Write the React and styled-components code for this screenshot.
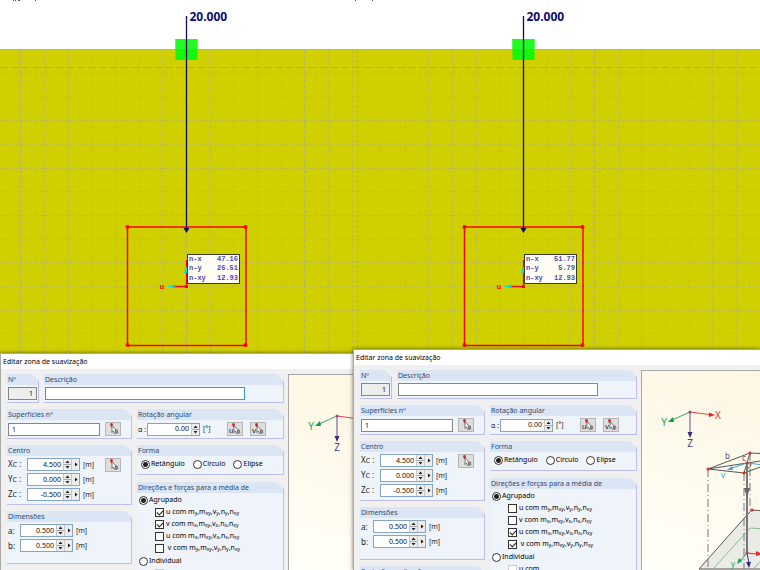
import { useId } from "react";
import styled, { createGlobalStyle } from "styled-components";

const GlobalStyle = createGlobalStyle`
  * {
    box-sizing: border-box;
  }
  body {
    margin: 0;
    background: #d0d000;
    font-family: "Noto Sans", "Open Sans", sans-serif;
    font-size: 7px;
    line-height: 10px;
    color: #1c1c1c;
  }
`;

const Page = styled.main`
  display: grid;
  grid-template-columns: 353fr 407fr;
  height: 100vh;
  overflow: hidden;
`;

const Pane = styled.section`
  display: flex;
  flex-direction: column;
  min-width: 0;
  min-height: 0;
`;

const Viewport = styled.div`
  position: relative;
  flex: 0 0 ${(props) => props.$height}px;
  background: #d0d000;
  overflow: hidden;
`;

const Mesh = styled.svg`
  display: block;
  width: 100%;
  height: 100%;
`;

const LoadLabel = styled.text`
  font-size: 12px;
  font-weight: 700;
  fill: #0a0a6e;
`;

const AxisLabel = styled.text`
  font-family: "Liberation Mono", monospace;
  font-size: 8px;
  font-weight: 700;
  fill: #f00;
`;

const ResultTip = styled.table`
  position: absolute;
  top: 254px;
  left: ${(props) => props.$left}px;
  width: 53px;
  height: 30px;
  border: 1px solid #3c3c28;
  border-spacing: 0;
  background: #fffcf4;
  color: #4a45b4;
  font-family: "Liberation Mono", monospace;
  font-size: 7px;
  font-weight: 700;
  line-height: 9px;

  th,
  td {
    padding: 0 1px;
    font-weight: 700;
    text-align: left;
  }
  td {
    text-align: right;
  }
`;

const Window = styled.form`
  position: relative;
  flex: 1;
  display: flex;
  flex-direction: column;
  min-height: 0;
  border: 1px solid #a9a9a9;
  border-width: 1px 0 0 1px;
  background: #f0f0f0;
  box-shadow: 0 0 4px rgba(0, 0, 0, 0.55);
`;

const TitleBar = styled.h1`
  flex: 0 0 15px;
  margin: 0;
  padding: 0 2px;
  background: #fff;
  color: #000;
  font-size: 7px;
  font-weight: 400;
  line-height: 15px;
  white-space: nowrap;
`;

const Body = styled.div`
  flex: 1;
  display: flex;
  gap: 4px;
  min-height: 0;
  padding: 5px 0 0 6px;
`;

const Fields = styled.div`
  flex: 0 0 277px;
  display: flex;
  flex-direction: column;
  gap: 6px;
  overflow: hidden;
`;

const Columns = styled.div`
  display: grid;
  grid-template-columns: ${(props) => props.$cols};
  gap: 5px;
  align-items: start;
`;

const Stack = styled.div`
  display: flex;
  flex-direction: column;
  gap: ${(props) => props.$gap}px;
`;

const Options = styled.div`
  padding-bottom: 1px;
`;

const Group = styled.fieldset`
  min-width: 0;
  min-height: ${(props) => props.$height}px;
  margin: 0;
  padding: 0;
  border: 1px solid #bdbdf0;
  border-width: 0 1px 1px 0;
  background: #eff3fa;
  clip-path: polygon(0 0, calc(100% - 7px) 0, 100% 7px, 100% 100%, 0 100%);
`;

const GroupTitle = styled.legend`
  float: left;
  width: 100%;
  height: 11px;
  padding: 0 1px;
  background: #dbe5f4;
  color: #2b4a72;
  line-height: 11px;
  white-space: nowrap;
`;

const GroupBody = styled.div`
  clear: both;
  display: flex;
  align-items: ${(props) => props.$align || "center"};
  gap: ${(props) => props.$gap || 5}px;
  padding: ${(props) => props.$pad || "2px 1px"};
`;

const TextBox = styled.input`
  width: ${(props) => props.$width};
  height: 13px;
  padding: 0 3px;
  border: 1px solid ${(props) => (props.$active ? "#3a96dd" : "#84868a")};
  outline: none;
  background: ${(props) => (props.readOnly ? "#eee" : "#fff")};
  color: #111;
  font: inherit;
  text-align: ${(props) => props.$align || "left"};
`;

const Line = styled.div`
  display: flex;
  align-items: center;
  height: 13px;
  white-space: nowrap;
`;

const Name = styled.label`
  flex: 0 0 ${(props) => props.$width}px;
  font-size: 8px;

  small {
    font-size: 7px;
  }
`;

const NumberBox = styled.span`
  display: flex;
  width: ${(props) => props.$width}px;
  height: 13px;
  border: 1px solid #86a4c4;
  background: #fff;
`;

const NumberInput = styled.input`
  flex: 1;
  min-width: 0;
  padding: 0 2px 0 0;
  border: 0;
  outline: none;
  background: transparent;
  color: #111;
  font: inherit;
  text-align: right;
`;

const SpinButton = styled.button`
  flex: 0 0 8px;
  padding: 0;
  border: 0;
  border-left: 1px solid #c8c8c8;
  background: #ececec;
  line-height: 0;
`;

const Unit = styled.span`
  width: 10px;
  margin-left: 3px;
`;

const PickButton = styled.button`
  display: flex;
  align-items: center;
  justify-content: center;
  width: 16px;
  height: 14px;
  padding: 0;
  border: 1px solid #b5b5b5;
  background: #dedede;
`;

const PickPair = styled.div`
  display: flex;
  gap: 7px;
`;

const Choice = styled.label`
  display: flex;
  align-items: center;
  gap: 1px;
  height: 12px;
  padding-left: ${(props) => props.$indent || 0}px;
  color: #000;
  white-space: pre;
`;

const Radio = styled.input`
  flex: none;
  appearance: none;
  width: 9px;
  height: 9px;
  margin: 0;
  border: 1px solid #333;
  border-radius: 50%;
  background: #fff;

  &:checked {
    background: radial-gradient(circle, #222 0 2px, #fff 3px);
  }
`;

const CheckBox = styled.input`
  flex: none;
  appearance: none;
  position: relative;
  width: 9px;
  height: 9px;
  margin: 0 1px 0 0;
  border: 1px solid #333;
  background: #fff;

  &:disabled {
    border-color: #ccc;
  }

  &:checked::after {
    content: "";
    position: absolute;
    top: 0;
    left: 2px;
    width: 3px;
    height: 5px;
    border: solid #222;
    border-width: 0 1px 1px 0;
    transform: rotate(45deg);
  }
`;

const Sub = styled.small`
  position: relative;
  top: 1px;
  font-size: 5px;
`;

const Preview = styled.div`
  flex: 1;
  min-width: 0;
  border: 1px solid #a8a8a8;
  border-width: 1px 0 0 1px;
  background: linear-gradient(20deg, #fffef8, #fdf6e2);
  overflow: hidden;
`;

const Drawing = styled.svg`
  display: block;
  width: 100%;
  height: 100%;
`;

const STEP = 23.67;

function Scene({ cx, height, ticks, results }) {
  const cols = [];
  for (let i = -10; i <= 12; i++) cols.push(i);
  const rows = [];
  for (let i = -9; i <= 2; i++) rows.push(i);
  return (
    <Viewport $height={height}>
      <Mesh>
        <rect width="100%" height="49" fill="#fff" />
        {ticks.map((x) => (
          <rect key={x} x={x} y="0" width="1" height="1" fill="#555" />
        ))}
        <rect y="49" width="100%" height="1" fill="#86dc48" />
        <g shapeRendering="crispEdges">
          {cols.map((i) => (
            <line
              key={i}
              x1={cx + i * STEP}
              x2={cx + i * STEP}
              y1="50"
              y2="100%"
              stroke={[-7, 0, 3, 5].includes(i) ? "#b2af78" : "#bfbc4c"}
              strokeDasharray="3 2"
            />
          ))}
          {rows.map((i) => (
            <line
              key={i}
              x1="0"
              x2="100%"
              y1={286.5 + i * STEP}
              y2={286.5 + i * STEP}
              stroke={i % 2 ? "#bab75c" : "#c0bc48"}
              strokeDasharray="3 2"
            />
          ))}
          <line x1="0" x2="100%" y1="67.5" y2="67.5" stroke="#aaa780" strokeDasharray="8 3" />
        </g>
        <rect x={cx - 11} y="39" width="22" height="21" fill="#14f60c" />
        <rect x={cx - 11} y="39" width="22" height="10" fill="#22fb22" />
        <rect x={cx - 59} y="227" width="118.500" height="118.500" fill="none" stroke="#f00" strokeWidth="1.500" />
        {[-59, 59].map((dx) =>
          [227, 345].map((y) => (
            <circle key={`${dx}${y}`} cx={cx + dx} cy={y} r="2" fill="#f00" />
          ))
        )}
        <line x1={cx} x2={cx} y1="16" y2="230" stroke="#0a0a6e" strokeWidth="1.300" />
        <path d={`M${cx - 3} 228h6l-3 5z`} fill="#0a0a6e" />
        <LoadLabel x={cx + 3} y="21">20.000</LoadLabel>
        <path d={`M${cx} 260V286.500H${cx - 14}`} fill="none" stroke="#f00" strokeWidth="1.300" />
        <path d={`M${cx - 2.5} 273l2.500-7 2 7z M${cx - 12} 284.500l-8 2 8 1.500z`} fill="#00dede" />
        <rect x={cx - 1.5} y="285" width="3" height="3" fill="#f00" />
        <AxisLabel x={cx - 27} y="289">u</AxisLabel>
      </Mesh>
      <ResultTip $left={Math.ceil(cx)}>
        <tbody>
          {results.map(([name, value]) => (
            <tr key={name}>
              <th scope="row">{name}</th>
              <td>{value}</td>
            </tr>
          ))}
        </tbody>
      </ResultTip>
    </Viewport>
  );
}

function PickIcon({ letter }) {
  return (
    <svg width="14" height="12" viewBox="0 0 14 12">
      {letter && (
        <text x="1" y="10" fontSize="8" fill="#222">{letter}</text>
      )}
      <path d="M4 1.500h3M5.500 0v4" stroke="#c33" strokeWidth="1.500" />
      <path d="M6 2.500v7l1.500-1.500 1 2.500 1.500-.5-1-2.500h1.500z" fill="#fff" stroke="#444" strokeWidth=".7" />
      <path d="M10 8l1 3M11 6.500l1 3.500" stroke="#555" strokeWidth=".8" />
    </svg>
  );
}

function Spinner({ name, labelWidth, value, unit = "[m]", step = true }) {
  const id = useId();
  return (
    <Line>
      <Name htmlFor={id} $width={labelWidth}>{name}</Name>
      <NumberBox $width={53}>
        <NumberInput id={id} defaultValue={value} />
        <SpinButton type="button" aria-label="Alterar valor">
          <svg width="7" height="11" viewBox="0 0 7 11">
            <path d="M1.500 4l2-2.500 2 2.500zM1.500 7l2 2.500 2-2.500z" fill="#222" />
            <path d="M0 5.500h7" stroke="#aaa" />
          </svg>
        </SpinButton>
        {step && (
          <SpinButton type="button" aria-label="Mais opções">
            <svg width="6" height="11" viewBox="0 0 6 11">
              <path d="M2 3.500l2.500 2-2.500 2z" fill="#111" />
            </svg>
          </SpinButton>
        )}
      </NumberBox>
      <Unit>{unit}</Unit>
    </Line>
  );
}

function Forces({ prefix, axis }) {
  return (
    <span>
      {prefix} com m<Sub>{axis}</Sub>,m<Sub>xy</Sub>,v<Sub>{axis}</Sub>,n<Sub>{axis}</Sub>,n<Sub>xy</Sub>
    </span>
  );
}

function Axes() {
  return (
    <g fontSize="10" textAnchor="middle">
      <path d="M48 41l19 2.500" stroke="#ee4444" />
      <path d="M67 41.500l6 2.500-6 2z" fill="#ee2222" />
      <path d="M48 41l-18 8" stroke="#3aa860" />
      <path d="M26 51l5-5 1 5z" fill="#0f9f48" />
      <path d="M48 41v21" stroke="#5a4fa0" />
      <path d="M45.500 61h5l-2.500 6z" fill="#33298a" />
      <circle cx="48" cy="41" r="1.500" fill="#a0447c" />
      <text x="76" y="48" fill="#ee3333">X</text>
      <text x="22" y="55" fill="#22a855">Y</text>
      <text x="48" y="76" fill="#4a4296">Z</text>
    </g>
  );
}

function LoadModel() {
  return (
    <g fill="none" stroke="#555">
      <path d="M57 198L109.500 139L320 153V198z" fill="#ebebe5" />
      <path d="M71 198l37-41 200 13M111 198l12-12" stroke="#8fb896" />
      <path d="M66 98v110M102 102v96M108 82v57" stroke="#777" strokeDasharray="8 3 1 3" />
      <path d="M66 98l42-16 200 10M66 98l39-6 60-9M66 98l36 4 60-22M108 82l-6 20" />
      <path d="M105 92l-15 5M105 92l60 7" stroke="#2aa9e0" />
      <path d="M85 99l5-4 1 4z" fill="#2aa9e0" stroke="none" />
      <path d="M109 93q-1 5-5 4" />
      <path d="M105 92v90" stroke="#777" strokeWidth="2" />
      <path d="M102 117h6l-3 9z" fill="#666" stroke="none" />
      <path d="M105 182l10 1" stroke="#e22" />
      <path d="M114 180l6 3-6 2z" fill="#e22" stroke="none" />
      <path d="M105 182l-7 8" stroke="#0f9f48" />
      <path d="M105 182l2 10" stroke="#33298a" />
      <path d="M95 193l2-6 3 3z" fill="#0f9f48" stroke="none" />
      <path d="M104 191h5l-2 6z" fill="#33298a" stroke="none" />
      <g fill="#ee2222" stroke="none">
        <circle cx="66" cy="98" r="1.500" />
        <circle cx="108" cy="82" r="1.500" />
        <circle cx="105" cy="92" r="1.500" />
        <circle cx="102" cy="102" r="1.500" />
        <circle cx="110" cy="139" r="1.500" />
        <circle cx="105" cy="182" r="1.500" fill="#a0447c" />
      </g>
      <g stroke="none" fontSize="8">
        <text x="83" y="88" fill="#555">b</text>
        <text x="100" y="90" fill="#555">c</text>
        <text x="79" y="107" fill="#2aa9e0">v</text>
        <text x="89" y="196" fill="#22a855">y</text>
      </g>
    </g>
  );
}

const OPTIONS = [
  ["u", "y"],
  ["v", "x"],
  ["u", "x"],
  [" v", "y"],
];

function SmoothingDialog({ active, checked, model }) {
  const id = useId();
  return (
    <Window aria-labelledby={`${id}title`}>
      <TitleBar id={`${id}title`}>Editar zona de suavização</TitleBar>
      <Body>
        <Fields>
          <Columns $cols="32px 1fr">
            <Group $height={29}>
              <GroupTitle>Nº</GroupTitle>
              <GroupBody>
                <TextBox aria-label="Nº" readOnly $width="29px" $align="right" defaultValue="1" />
              </GroupBody>
            </Group>
            <Group $height={29}>
              <GroupTitle>Descrição</GroupTitle>
              <GroupBody>
                <TextBox aria-label="Descrição" $active={active} $width="200px" />
              </GroupBody>
            </Group>
          </Columns>
          <Columns $cols="125px 1fr">
            <Group $height={29}>
              <GroupTitle>Superfícies nº</GroupTitle>
              <GroupBody>
                <TextBox aria-label="Superfícies nº" $width="92px" defaultValue="1" />
                <PickButton type="button" aria-label="Selecionar superfícies"><PickIcon /></PickButton>
              </GroupBody>
            </Group>
            <Group $height={29}>
              <GroupTitle>Rotação angular</GroupTitle>
              <GroupBody $gap={14}>
                <Spinner name={<small>α :</small>} labelWidth={9} value="0.00" unit="[°]" step={false} />
                <PickPair>
                  <PickButton type="button" aria-label="Direção u"><PickIcon letter="u" /></PickButton>
                  <PickButton type="button" aria-label="Direção v"><PickIcon letter="v" /></PickButton>
                </PickPair>
              </GroupBody>
            </Group>
          </Columns>
          <Columns $cols="125px 1fr">
            <Stack $gap={6}>
              <Group $height={60}>
                <GroupTitle>Centro</GroupTitle>
                <GroupBody $align="flex-start" $gap={12}>
                  <Stack $gap={2}>
                    <Spinner name={<>X<small>C</small> :</>} labelWidth={19} value="4.500" />
                    <Spinner name={<>Y<small>C</small> :</>} labelWidth={19} value="0.000" />
                    <Spinner name={<>Z<small>C</small> :</>} labelWidth={19} value="-0.500" />
                  </Stack>
                  <PickButton type="button" aria-label="Selecionar centro"><PickIcon /></PickButton>
                </GroupBody>
              </Group>
              <Group $height={53}>
                <GroupTitle>Dimensões</GroupTitle>
                <GroupBody>
                  <Stack $gap={2}>
                    <Spinner name="a:" labelWidth={12} value="0.500" />
                    <Spinner name="b:" labelWidth={12} value="0.500" />
                  </Stack>
                </GroupBody>
              </Group>
              <Group $height={53}>
                <GroupTitle>Projeção na direção</GroupTitle>
              </Group>
            </Stack>
            <Stack $gap={7}>
              <Group $height={30}>
                <GroupTitle>Forma</GroupTitle>
                <GroupBody $gap={8} $pad="2px 4px">
                  <Choice><Radio type="radio" name={`${id}shape`} defaultChecked />Retângulo</Choice>
                  <Choice><Radio type="radio" name={`${id}shape`} />Círculo</Choice>
                  <Choice><Radio type="radio" name={`${id}shape`} />Elipse</Choice>
                </GroupBody>
              </Group>
              <Group $height={140}>
                <GroupTitle>Direções e forças para a média de</GroupTitle>
                <GroupBody $pad="1px 2px">
                  <Stack $gap={0}>
                    <Choice><Radio type="radio" name={`${id}mode`} defaultChecked />Agrupado</Choice>
                    <Options>
                      {OPTIONS.map(([prefix, axis], i) => (
                        <Choice key={i} $indent={16}>
                          <CheckBox type="checkbox" defaultChecked={checked.includes(i)} />
                          <Forces prefix={prefix} axis={axis} />
                        </Choice>
                      ))}
                    </Options>
                    <Choice><Radio type="radio" name={`${id}mode`} />Individual</Choice>
                    <Choice $indent={16}>
                      <CheckBox type="checkbox" disabled />
                      u com
                    </Choice>
                  </Stack>
                </GroupBody>
              </Group>
            </Stack>
          </Columns>
        </Fields>
        <Preview>
          <Drawing>
            <Axes />
            {model && <LoadModel />}
          </Drawing>
        </Preview>
      </Body>
    </Window>
  );
}

export default function App() {
  return (
    <Page>
      <GlobalStyle />
      <Pane>
        <Scene
          cx={186.5}
          height={353}
          ticks={[13, 15, 18, 19, 35]}
          results={[["n-x", "47.16"], ["n-y", "26.51"], ["n-xy", "12.93"]]}
        />
        <SmoothingDialog active checked={[0, 1]} />
      </Pane>
      <Pane>
        <Scene
          cx={170.5}
          height={349}
          ticks={[2, 19]}
          results={[["n-x", "51.77"], ["n-y", "5.79"], ["n-xy", "12.93"]]}
        />
        <SmoothingDialog checked={[2, 3]} model />
      </Pane>
    </Page>
  );
}
